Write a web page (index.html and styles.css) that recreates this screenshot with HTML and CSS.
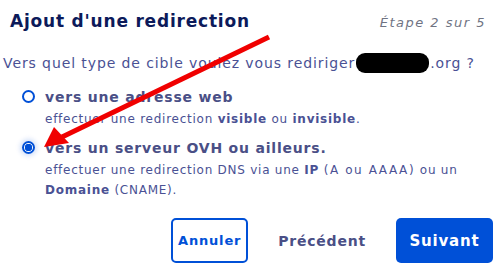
FILE: index.html
```html
<!DOCTYPE html>
<html lang="fr">
<head>
<meta charset="utf-8">
<link rel="stylesheet" href="styles.css">
</head>
<body>
<div class="dialog">
  <div class="header">
    <h1 class="title">Ajout d'une redirection</h1>
    <span class="step">Étape 2 sur 5</span>
  </div>
  <p class="question">Vers quel type de cible voulez vous rediriger<span class="redact"></span>.org ?</p>
  <div class="options">
    <label class="option">
      <span class="radio"></span>
      <span class="opt-text">
        <span class="opt-title">vers une adresse web</span>
        <span class="opt-desc">effectuer une redirection <b>visible</b> ou <b>invisible</b>.</span>
      </span>
    </label>
    <label class="option">
      <span class="radio checked"></span>
      <span class="opt-text">
        <span class="opt-title">vers un serveur OVH ou ailleurs.</span>
        <span class="opt-desc">effectuer une redirection DNS via une <b>IP</b> <span class="caps">(A ou AAAA)</span> ou un <b>Domaine</b> (CNAME).</span>
      </span>
    </label>
  </div>
  <div class="actions">
    <button class="btn btn-outline">Annuler</button>
    <button class="btn btn-link">Précédent</button>
    <button class="btn btn-primary">Suivant</button>
  </div>
</div>
<svg class="arrow" width="500" height="271" viewBox="0 0 500 271">
  <line x1="269" y1="37" x2="62" y2="137" stroke="#f00000" stroke-width="5"/>
  <polygon points="44,147 54,127 69,143" fill="#f00000"/>
</svg>
</body>
</html>
```
FILE: styles.css
```css
html, body {
  margin: 0;
  padding: 0;
  background: #ffffff;
}
body {
  width: 500px;
  height: 271px;
  overflow: hidden;
  position: relative;
  font-family: "DejaVu Sans", "Noto Sans", sans-serif;
}
.dialog {
  display: flex;
  flex-direction: column;
}
.header {
  display: flex;
  justify-content: space-between;
  align-items: baseline;
  padding: 11px 14px 0 10px;
}
.title {
  margin: 0;
  font-size: 17px;
  font-weight: bold;
  letter-spacing: 0.8px;
  color: #0c1a5a;
}
.step {
  font-size: 13px;
  font-style: italic;
  color: #6f7382;
  letter-spacing: 1.5px;
}
.question {
  margin: 22px 0 0 3px;
  font-size: 14px;
  letter-spacing: 0.9px;
  color: #4a5194;
  display: flex;
  align-items: center;
}
.redact {
  display: inline-block;
  width: 73px;
  height: 20px;
  background: #000;
  border-radius: 9px;
  margin: 0 1px;
}
.options {
  display: flex;
  flex-direction: column;
  gap: 11px;
  padding: 16px 0 0 22px;
}
.option {
  display: flex;
  align-items: flex-start;
  gap: 10px;
}
.radio {
  flex: none;
  width: 13px;
  height: 13px;
  box-sizing: border-box;
  border: 2px solid #0050d7;
  border-radius: 50%;
  margin-top: 1px;
  background: #fff;
}
.radio.checked {
  background: radial-gradient(circle, #0050d7 0 3.5px, #fff 4px);
  box-shadow: 0 0 5px 2px rgba(0, 80, 215, 0.18);
}
.opt-text {
  display: flex;
  flex-direction: column;
}
.opt-title {
  font-size: 14px;
  font-weight: bold;
  letter-spacing: 0.8px;
  line-height: 16px;
  color: #4a4f86;
}
.opt-desc {
  font-size: 12px;
  letter-spacing: 0.75px;
  line-height: 20px;
  margin-top: 4px;
  color: #4a5194;
}
.opt-desc b {
  font-weight: bold;
}
.caps {
  letter-spacing: 1.6px;
}
.actions {
  display: flex;
  justify-content: flex-end;
  align-items: center;
  gap: 30px;
  padding: 18px 7px 0 0;
}
.btn {
  font-family: "DejaVu Sans", "Noto Sans", sans-serif;
  font-weight: bold;
  font-size: 13px;
  letter-spacing: 0.8px;
  border-radius: 5px;
  height: 45px;
  cursor: pointer;
}
.btn-outline {
  background: #fff;
  border: 2px solid #0050d7;
  color: #0050d7;
  width: 77px;
  padding: 0;
}
.btn-link {
  background: none;
  border: none;
  color: #4a4f86;
  font-size: 14px;
  padding: 0;
}
.btn-primary {
  background: #0050d7;
  border: none;
  color: #fff;
  width: 97px;
  font-size: 15px;
}
.arrow {
  position: absolute;
  left: 0;
  top: 0;
  pointer-events: none;
}
```
